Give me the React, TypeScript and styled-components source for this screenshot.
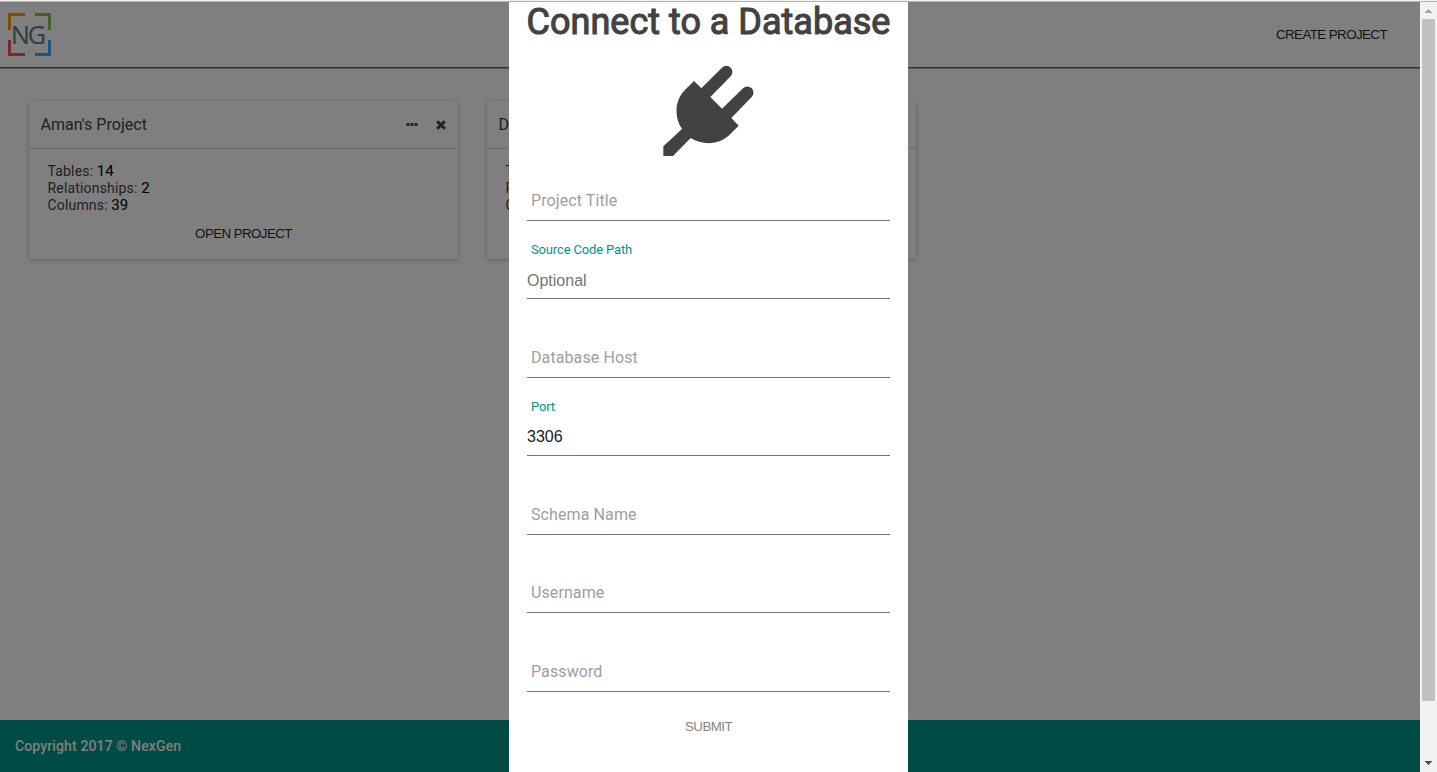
import React from "react";
import styled, { createGlobalStyle } from "styled-components";

const GlobalStyle = createGlobalStyle`
  *, *::before, *::after { box-sizing: border-box; }
  body { margin: 0; overflow: hidden; font-family: Roboto, "Liberation Sans", sans-serif; color: rgba(0, 0, 0, 0.87); }
  button, input { font-family: "Liberation Sans", Arial, sans-serif; }
`;

const Window = styled.div`
  display: flex;
  flex-direction: column;
  height: 772px;
  border-top: 1px solid #f2f2f2;
`;

const Frame = styled.div`
  display: flex;
  flex: 1;
  min-height: 0;
  border-top: 1px solid #b1b3b2;
`;

const Viewport = styled.div`
  position: relative;
  display: flex;
  flex-direction: column;
  flex: 1;
  background: #fff;
`;

const Header = styled.header`
  display: flex;
  align-items: center;
  justify-content: space-between;
  height: 67px;
  padding: 0 33px 1px 8px;
  border-bottom: 1px solid #b0b0b0;
  box-shadow: inset 0 -1px 0 #606060;
`;

const FlatButton = styled.button<{ $muted?: boolean }>`
  padding: 0;
  border: 0;
  background: none;
  font-size: 13.33px;
  line-height: 16px;
  letter-spacing: -0.57px;
  text-transform: uppercase;
  color: ${(p) => (p.$muted ? "#858585" : "rgba(0, 0, 0, 0.87)")};
`;

const Cards = styled.main`
  display: flex;
  flex: 1;
  align-items: flex-start;
  gap: 29px;
  padding: 32px 29px;
`;

const Card = styled.section`
  width: 429px;
  height: 158px;
  border-radius: 2px;
  box-shadow: 0 1px 4px rgba(0, 0, 0, 0.28);
`;

const CardHeader = styled.div`
  display: flex;
  align-items: center;
  height: 48px;
  padding: 0 12px 0 11.5px;
  border-bottom: 1px solid #d6d6d6;
`;

const CardTitle = styled.h2`
  flex: 1;
  margin: 0;
  font-size: 16px;
  font-weight: 400;
  line-height: 21px;
  letter-spacing: 0.04px;
  color: #424242;
`;

const CardIcons = styled.div`
  display: flex;
  align-items: center;
  gap: 18px;
  padding-top: 1px;
`;

const CardBody = styled.div`
  display: flex;
  flex-direction: column;
  padding: 14px 18.5px;
`;

const Stat = styled.div`
  font-size: 14px;
  line-height: 17px;
  letter-spacing: 0.17px;
  color: #424242;
`;

const StatValue = styled.span`
  font-size: 15px;
  letter-spacing: 0;
  color: #000;
`;

const CardAction = styled.div`
  display: flex;
  justify-content: center;
  padding-top: 12px;
`;

const Footer = styled.footer`
  display: flex;
  align-items: center;
  height: 52px;
  padding-left: 15px;
  background: #009688;
  color: #fff;
  font-size: 14px;
  font-weight: 500;
  letter-spacing: 0.13px;
`;

const Overlay = styled.div`
  position: absolute;
  inset: 0;
  display: flex;
  justify-content: center;
  padding-right: 3px;
  background: rgba(0, 0, 0, 0.5);
`;

const Dialog = styled.div`
  display: flex;
  flex-direction: column;
  align-items: center;
  width: 399px;
  padding: 0 18px;
  background: #fff;
`;

const DialogTitle = styled.h1`
  margin: 0 0 23px;
  font-size: 36px;
  font-weight: 400;
  line-height: 41px;
  white-space: nowrap;
  color: #424242;
  -webkit-text-stroke: 1.1px #424242;
`;

const Form = styled.form`
  display: flex;
  flex-direction: column;
  width: 100%;
  padding-top: 7px;
`;

const Field = styled.label`
  display: flex;
  flex-direction: column;
  justify-content: flex-end;
  height: 78.5px;
  border-bottom: 1px solid #757575;

  &:first-child { height: 57.5px; }
`;

const FloatingLabel = styled.span`
  padding-left: 4px;
  font-size: 13px;
  line-height: 16px;
  letter-spacing: -0.15px;
  color: #009688;
`;

const Placeholder = styled.span`
  padding: 0 0 9px 4px;
  font-size: 16px;
  line-height: 20px;
  letter-spacing: 0.1px;
  color: #9e9e9e;
`;

const Input = styled.input`
  width: 100%;
  height: 40px;
  padding: 3px 0 0;
  border: 0;
  outline: 0;
  background: none;
  font-size: 16px;
  color: #212121;

  &:placeholder-shown { padding-top: 5px; }
  &::placeholder { color: #757575; opacity: 1; }
`;

const Submit = styled.div`
  display: flex;
  justify-content: center;
  padding-top: 27px;
`;

const Scrollbar = styled.div`
  display: flex;
  flex-direction: column;
  align-items: center;
  width: 17px;
  padding-bottom: 1px;
  background: #f1f1f1;
`;

const Thumb = styled.div`
  width: 13px;
  height: 682px;
  margin: 0 0 auto;
  background: #c1c1c1;
`;

const ArrowBox = styled.div`
  display: flex;
  justify-content: center;
  align-items: center;
  width: 17px;
  height: 17px;
`;

const Logo = () => (
  <svg width="43" height="43" viewBox="0 0 43 43" fill="none" strokeWidth="3">
    <path d="M1.5 17V1.5H17" stroke="#ff9800" />
    <path d="M27 1.5H41.5V17" stroke="#8bc34a" />
    <path d="M1.5 27V41.5H17" stroke="#ef5350" />
    <path d="M27 41.5H41.5V27" stroke="#42a5f5" />
    <text x="3" y="31" fontFamily="Open Sans" fontSize="25" textLength="35" fill="#607d8b" stroke="#607d8b" strokeWidth="0.2">NG</text>
  </svg>
);

const Plug = () => (
  <svg width="91" height="90" viewBox="0 0 273 270" fill="#424242">
    <path d="M93 45L115 67L177 5A18 18 0 0 1 203 31L142 93L177 128L240 67A18 18 0 0 1 266 93L205 156L227 179L205 201C173 237 121 240 83 216L30 270H1V241L57 189C33 154 34 101 68 70Z" />
  </svg>
);

const Dots = () => (
  <svg width="12" height="4" viewBox="0 0 12 4" fill="#424242">
    <rect x="0.5" y="0" width="3" height="3" rx="0.5" />
    <rect x="4.5" y="0" width="3" height="3" rx="0.5" />
    <rect x="8.5" y="0" width="3" height="3" rx="0.5" />
  </svg>
);

const Cross = () => (
  <svg width="10" height="10" viewBox="0 0 10 10" stroke="#424242" strokeWidth="3">
    <path d="M1.2 1.2L8.8 8.8M8.8 1.2L1.2 8.8" />
  </svg>
);

const Arrow = ({ down }: { down?: boolean }) => (
  <svg width="7" height="4" viewBox="0 0 7 4" shapeRendering="crispEdges" fill={down ? "#505050" : "#a3a3a3"}>
    <path d={down ? "M0 0H7L3.5 4Z" : "M0 4H7L3.5 0Z"} />
  </svg>
);

type Project = { title: string; tables: number; relationships: number; columns: number };

const projects: Project[] = [
  { title: "Aman's Project", tables: 14, relationships: 2, columns: 39 },
  { title: "D", tables: 14, relationships: 2, columns: 39 },
];

const ProjectCard = ({ title, tables, relationships, columns }: Project) => (
  <Card>
    <CardHeader>
      <CardTitle>{title}</CardTitle>
      <CardIcons><Dots /><Cross /></CardIcons>
    </CardHeader>
    <CardBody>
      <Stat>Tables: <StatValue>{tables}</StatValue></Stat>
      <Stat>Relationships: <StatValue>{relationships}</StatValue></Stat>
      <Stat>Columns: <StatValue>{columns}</StatValue></Stat>
      <CardAction><FlatButton>Open Project</FlatButton></CardAction>
    </CardBody>
  </Card>
);

type FieldSpec = { label: string; floating?: boolean; placeholder?: string; value?: string };

const fields: FieldSpec[] = [
  { label: "Project Title" },
  { label: "Source Code Path", floating: true, placeholder: "Optional" },
  { label: "Database Host" },
  { label: "Port", floating: true, value: "3306" },
  { label: "Schema Name" },
  { label: "Username" },
  { label: "Password" },
];

export default function App() {
  return (
    <Window>
      <GlobalStyle />
      <Frame>
        <Viewport>
          <Header>
            <Logo />
            <FlatButton>Create Project</FlatButton>
          </Header>
          <Cards>
            {projects.map((p) => <ProjectCard key={p.title} {...p} />)}
          </Cards>
          <Footer>Copyright 2017 © NexGen</Footer>
          <Overlay>
            <Dialog>
              <DialogTitle>Connect to a Database</DialogTitle>
              <Plug />
              <Form>
                {fields.map((f) => (
                  <Field key={f.label}>
                    {f.floating ? (
                      <>
                        <FloatingLabel>{f.label}</FloatingLabel>
                        <Input placeholder={f.placeholder} defaultValue={f.value} />
                      </>
                    ) : (
                      <Placeholder>{f.label}</Placeholder>
                    )}
                  </Field>
                ))}
                <Submit><FlatButton type="button" $muted>Submit</FlatButton></Submit>
              </Form>
            </Dialog>
          </Overlay>
        </Viewport>
        <Scrollbar>
          <ArrowBox><Arrow /></ArrowBox>
          <Thumb />
          <ArrowBox><Arrow down /></ArrowBox>
        </Scrollbar>
      </Frame>
    </Window>
  );
}
